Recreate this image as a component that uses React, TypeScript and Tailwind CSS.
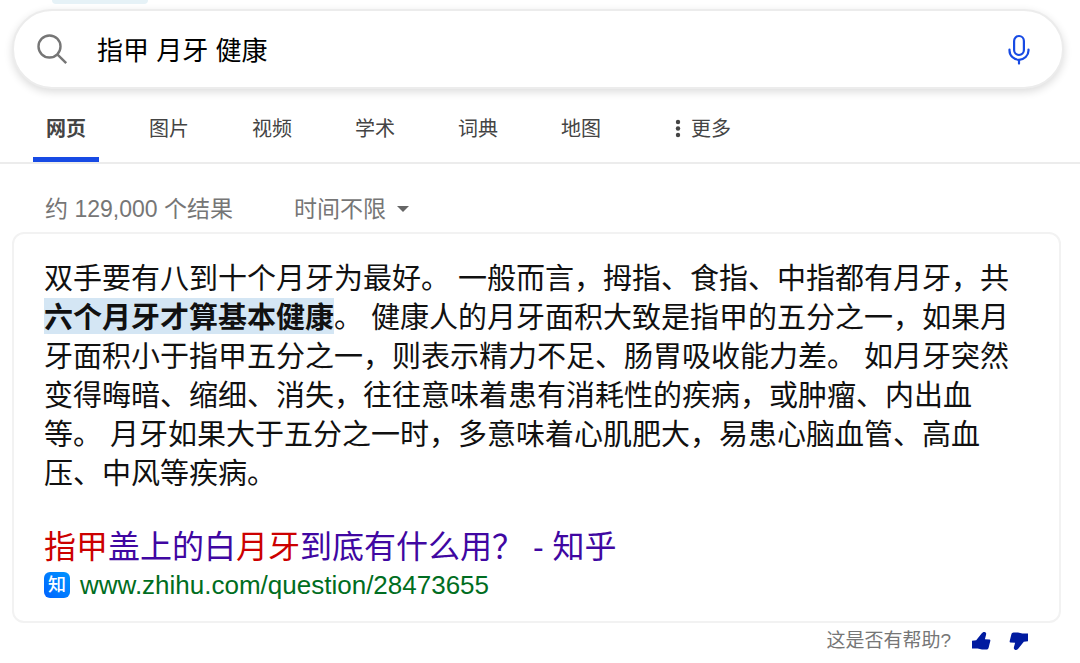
import type { ReactNode } from 'react';

const tabs = ['网页', '图片', '视频', '学术', '词典', '地图'];

const SearchIcon = () => (
    <svg viewBox="0 0 32 32" className="h-8 w-8" fill="none" stroke="#767676" strokeWidth="2.4" aria-hidden="true">
        <circle cx="13.5" cy="12.5" r="11" />
        <path d="M21.3 20.3 L30.2 29.2" />
    </svg>
);

const MicIcon = () => (
    <svg viewBox="0 0 24 32" className="h-8 w-6" fill="none" stroke="#174ae4" strokeWidth="2.2" strokeLinecap="round" aria-hidden="true">
        <rect x="7.1" y="2" width="9.8" height="19" rx="4.9" />
        <path d="M2.5 15.6 v.9 a9.5 9.3 0 0 0 19 0 v-.9" />
        <path d="M12 26 v3.6" />
    </svg>
);

const ThumbIcon = () => (
    <svg viewBox="0 0 20 20" className="h-5 w-5" fill="#001ba0" aria-hidden="true">
        <path d="M1 9.8 L5.2 9.2 L10.6 2.6 C11.3 1.6 12.4 .9 13.7 1.1 C15.2 1.5 15.4 2.6 15 4 L13.9 8.2 L18.6 8.5 C19.3 8.6 19.5 9.2 19.3 10 L17.6 16.8 C17.3 18 16.6 18.5 15.4 18.6 L11 18.6 L6.6 17.6 L1 17.6 Z" />
    </svg>
);

const Hit = ({ children }: { children: ReactNode }) => <strong className="font-normal text-[#cc0000]">{children}</strong>;

const SearchHeader = () => (
    <header>
        <div className="ml-[52px] h-1 w-24 rounded-b-full bg-[#e6f2f7]" />
        <form
            role="search"
            className="mt-[5px] mr-4 ml-3 flex h-20 items-center rounded-full border-2 border-[#ececec] bg-white pt-0.5 pr-[31px] pl-[22px] shadow-[0_3px_8px_rgba(0,0,0,0.14)]"
            onSubmit={(e) => e.preventDefault()}
        >
            <button type="submit" aria-label="搜索"><SearchIcon /></button>
            <input
                type="text"
                aria-label="搜索内容"
                defaultValue="指甲 月牙 健康"
                className="ml-[29px] min-w-0 flex-1 bg-transparent pt-0.5 text-[26px] leading-9 text-black outline-none"
            />
            <button type="button" aria-label="语音搜索"><MicIcon /></button>
        </form>
    </header>
);

const ScopeNav = () => (
    <nav className="mt-2.5 flex border-b-2 border-[#ececec] pl-[33px] text-[20px] leading-7 text-[#444]">
        <ul className="flex gap-[37px]">
            {tabs.map((tab, i) => (
                <li key={tab}>
                    <a
                        href="#"
                        className={i === 0
                            ? 'block border-b-5 border-[#174ae4] px-[13px] pt-4 pb-3.5 font-bold'
                            : 'block border-b-5 border-transparent px-[13px] pt-4 pb-3.5'}
                    >
                        {tab}
                    </a>
                </li>
            ))}
        </ul>
        <button type="button" className="ml-[61px] flex items-center gap-2.5 pt-4 pb-[19px]">
            <svg viewBox="0 0 6 20" className="h-5 w-1.5" fill="#444" aria-hidden="true">
                <circle cx="3" cy="3" r="2.2" />
                <circle cx="3" cy="9.5" r="2.2" />
                <circle cx="3" cy="16" r="2.2" />
            </svg>
            更多
        </button>
    </nav>
);

const AnswerCard = () => (
    <section className="mr-[19px] ml-3 rounded-xl border-2 border-[#f2f2f2] px-[30px] pt-[26px] pb-5">
        <p className="text-[29px] leading-[39px] text-[#111]">
            双手要有八到十个月牙为最好。 一般而言，拇指、食指、中指都有月牙，共<strong className="bg-[#d4e6f4] pt-1 font-bold">六个月牙才算基本健康</strong>。 健康人的月牙面积大致是指甲的五分之一，如果月牙面积小于指甲五分之一，则表示精力不足、肠胃吸收能力差。 如月牙突然变得晦暗、缩细、消失，往往意味着患有消耗性的疾病，或肿瘤、内出血等。 月牙如果大于五分之一时，多意味着心肌肥大，易患心脑血管、高血压、中风等疾病。
        </p>
        <h2 className="mt-[31px] text-[32px] leading-[44px]">
            <a href="#" className="text-[#4007a2]">
                <Hit>指甲</Hit>盖上的白<Hit>月牙</Hit>到底有什么用？ - 知乎
            </a>
        </h2>
        <div className="flex items-center gap-2.5">
            <span className="flex h-[26px] w-[26px] items-center justify-center rounded-md bg-linear-to-tr from-[#0062ff] to-[#0094ff] text-[18px] leading-6 font-medium text-white">知</span>
            <a href="#" className="text-[26px] leading-8 text-[#006d21]">www.zhihu.com/question/28473655</a>
        </div>
    </section>
);

const App = () => (
    <div className="bg-white font-['Liberation_Sans','Noto_Sans_CJK_SC',sans-serif]" lang="zh-CN">
        <SearchHeader />
        <ScopeNav />
        <main>
            <div className="flex items-center gap-[61px] pt-[29px] pb-[7px] pl-[45px] text-[23px] leading-8 text-[#767676]">
                <span>约 129,000 个结果</span>
                <button type="button" className="flex items-center gap-[11px]">
                    时间不限
                    <svg viewBox="0 0 12 8" className="h-2 w-3" fill="#666" aria-hidden="true">
                        <path d="M0 1 H12 L6 7 Z" />
                    </svg>
                </button>
            </div>
            <AnswerCard />
            <div className="flex items-center justify-end pt-1 pr-[51px] text-[19px] leading-7 text-[#767676]">
                <span>这是否有帮助?</span>
                <button type="button" aria-label="有帮助" className="ml-5"><ThumbIcon /></button>
                <button type="button" aria-label="没有帮助" className="ml-[18px] rotate-180"><ThumbIcon /></button>
            </div>
        </main>
    </div>
);

export default App;
